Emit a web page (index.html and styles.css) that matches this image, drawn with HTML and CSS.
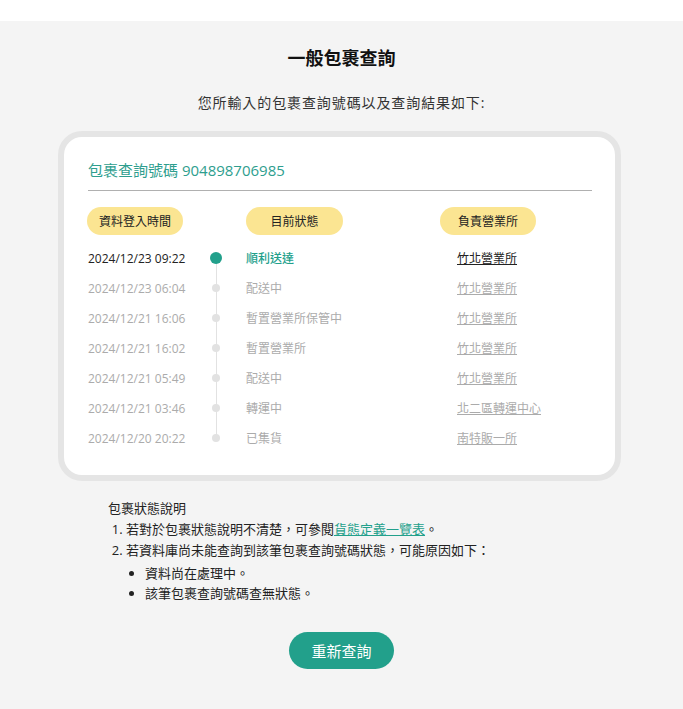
FILE: index.html
```html
<!DOCTYPE html>
<html lang="zh-Hant">
<head>
  <meta charset="UTF-8">
  <meta name="viewport" content="width=device-width, initial-scale=1">
  <title>一般包裹查詢</title>
  <link rel="stylesheet" href="styles.css">
</head>
<body>
  <div class="topbar"></div>

  <main class="page">
    <h2 class="page-title">一般包裹查詢</h2>
    <p class="page-sub">您所輸入的包裹查詢號碼以及查詢結果如下:</p>

    <section class="card">
      <div class="track-no">包裹查詢號碼 904898706985</div>

      <div class="track-table">
        <!-- 表頭 -->
        <span class="pill">資料登入時間</span>
        <span></span>
        <span class="pill pill-status">目前狀態</span>
        <span class="pill">負責營業所</span>

        <!-- 貨態紀錄 -->
        <div class="t-date current">2024/12/23 09:22</div>
        <div class="t-dot first"><i class="dot big"></i></div>
        <div class="t-status current">順利送達</div>
        <div class="t-office"><a href="#" class="current">竹北營業所</a></div>

        <div class="t-date">2024/12/23 06:04</div>
        <div class="t-dot"><i class="dot"></i></div>
        <div class="t-status">配送中</div>
        <div class="t-office"><a href="#">竹北營業所</a></div>

        <div class="t-date">2024/12/21 16:06</div>
        <div class="t-dot"><i class="dot"></i></div>
        <div class="t-status">暫置營業所保管中</div>
        <div class="t-office"><a href="#">竹北營業所</a></div>

        <div class="t-date">2024/12/21 16:02</div>
        <div class="t-dot"><i class="dot"></i></div>
        <div class="t-status">暫置營業所</div>
        <div class="t-office"><a href="#">竹北營業所</a></div>

        <div class="t-date">2024/12/21 05:49</div>
        <div class="t-dot"><i class="dot"></i></div>
        <div class="t-status">配送中</div>
        <div class="t-office"><a href="#">竹北營業所</a></div>

        <div class="t-date">2024/12/21 03:46</div>
        <div class="t-dot"><i class="dot"></i></div>
        <div class="t-status">轉運中</div>
        <div class="t-office"><a href="#">北二區轉運中心</a></div>

        <div class="t-date">2024/12/20 20:22</div>
        <div class="t-dot last"><i class="dot"></i></div>
        <div class="t-status">已集貨</div>
        <div class="t-office"><a href="#">南特販一所</a></div>
      </div>
    </section>

    <div class="notes">
      <p>包裹狀態說明</p>
      <ol>
        <li>若對於包裹狀態說明不清楚，可參閱<a href="#">貨態定義一覽表</a>。</li>
        <li>若資料庫尚未能查詢到該筆包裹查詢號碼狀態，可能原因如下：
          <ul>
            <li>資料尚在處理中。</li>
            <li>該筆包裹查詢號碼查無狀態。</li>
          </ul>
        </li>
      </ol>
    </div>

    <div class="actions">
      <button class="btn-again">重新查詢</button>
    </div>
  </main>
</body>
</html>
```

FILE: styles.css
```css
:root{
  --teal:#22a08b;
  --teal-text:#2e9e8e;
  --pill:#fbe592;
  --muted:#ababab;
  --line:#e2e2e2;
}

/* ---------- Mise en page ---------- */
*{box-sizing:border-box;margin:0;padding:0;}

body{
  font-family:"Open Sans","Noto Sans CJK TC",sans-serif;
  background:#f4f4f4;
  color:#333;
}

.topbar{height:21px;background:#fff;}

.page{padding:25px 0 39px;}

.page-title{
  font-size:18px;
  line-height:24px;
  font-weight:700;
  color:#111;
  text-align:center;
}

.page-sub{
  margin-top:22px;
  font-size:14px;
  line-height:22px;
  letter-spacing:.9px;
  text-align:center;
  color:#333;
}

/* ---------- Carte ---------- */
.card{
  width:563px;
  margin:17px 0 0 58px;
  background:#fff;
  border:6px solid #e5e5e5;
  border-radius:24px;
  padding:23px 23px 22px 24px;
}

.track-no{
  font-size:15px;
  line-height:20px;
  color:var(--teal-text);
  padding-bottom:10px;
  border-bottom:1px solid #b0b0b0;
}

.track-table{
  display:grid;
  grid-template-columns:110px 36px 207px 1fr;
  grid-template-rows:36px;
  grid-auto-rows:30px;
  margin-top:16px;
  font-size:12px;
  color:var(--muted);
}

.pill{
  width:96px;
  height:28px;
  margin-left:-1px;
  border-radius:14px;
  background:var(--pill);
  color:#222;
  font-size:12px;
  display:flex;
  align-items:center;
  justify-content:center;
}
.pill-status{margin-left:12px;width:97px;}

.t-date,.t-status,.t-office{display:flex;align-items:center;}
.t-status{padding-left:12px;}
.t-office{padding-left:16px;}

.t-office a{color:var(--muted);text-decoration:underline;}

.current{color:#222;}
.t-status.current{color:var(--teal);font-weight:500;}
.t-office a.current{color:#222;}

/* ligne verticale + points */
.t-dot{
  position:relative;
  display:flex;
  align-items:center;
  justify-content:center;
}
.t-dot::before{
  content:"";
  position:absolute;
  left:50%;
  top:0;
  bottom:0;
  width:1px;
  margin-left:-.5px;
  background:var(--line);
}
.t-dot.first::before{top:50%;}
.t-dot.last::before{bottom:50%;}

.dot{
  position:relative;
  width:8px;
  height:8px;
  border-radius:50%;
  background:var(--line);
}
.dot.big{width:12px;height:12px;background:var(--teal);}

/* ---------- Notes ---------- */
.notes{
  margin:17px 0 0 108px;
  font-size:13px;
  line-height:21px;
  color:#222;
}
.notes ol{padding-left:18px;}
.notes ul{padding-left:19px;margin-top:2px;list-style:disc;}
.notes ul li{line-height:20px;}
.notes a{color:var(--teal);text-decoration:underline;}

/* ---------- Bouton ---------- */
.actions{text-align:center;margin-top:29px;}

.btn-again{
  font-family:inherit;
  width:105px;
  height:37px;
  border:none;
  border-radius:19px;
  background:var(--teal);
  color:#fff;
  font-size:15px;
  cursor:pointer;
}
```
